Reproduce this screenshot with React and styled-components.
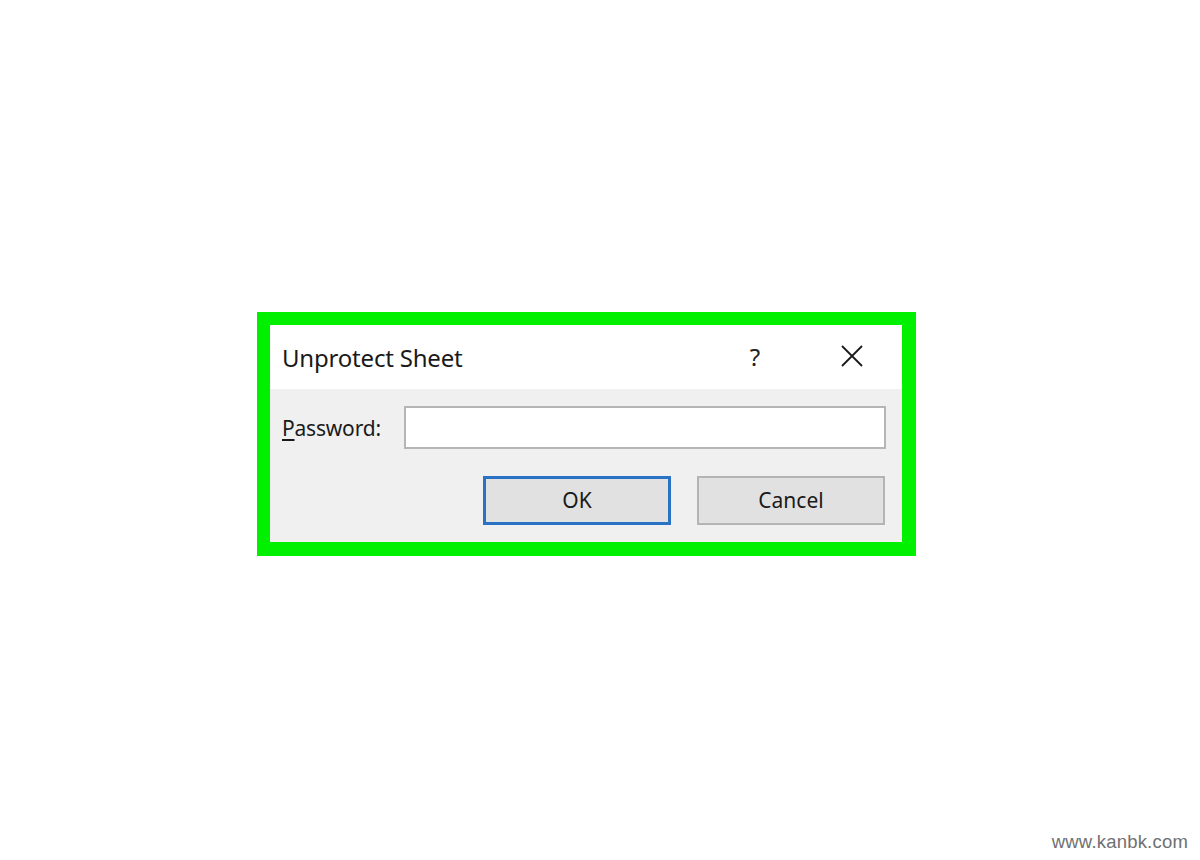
import React from "react";
import styled, { createGlobalStyle } from "styled-components";

const Global = createGlobalStyle`
  html, body { margin: 0; padding: 0; background: #ffffff; }
  body { font-family: "Noto Sans", "Open Sans", sans-serif; }
  #root { min-height: 860px; position: relative; }
`;

const Page = styled.div`
  width: 1200px;
  height: 860px;
  position: relative;
  overflow: hidden;
  padding-top: 312px;
  padding-left: 257px;
  box-sizing: border-box;
`;

const Frame = styled.div`
  width: 659px;
  box-sizing: border-box;
  border: 13px solid #00f000;
  border-right-width: 14px;
  border-bottom-width: 14px;
  background: #f0f0f0;
`;

const TitleBar = styled.div`
  height: 64px;
  background: #ffffff;
  display: flex;
  align-items: center;
  padding-left: 12px;
  padding-right: 38px;
`;

const Title = styled.div`
  flex: 1;
  font-size: 24px;
  color: #1a1a1a;
  letter-spacing: -0.2px;
  padding-top: 1px;
`;

const HelpGlyph = styled.div`
  font-size: 24px;
  color: #222;
  width: 20px;
  text-align: center;
  margin-right: 75px;
  padding-bottom: 2px;
`;

const CloseIcon = styled.svg`
  width: 24px;
  height: 24px;
  display: block;
  margin-bottom: 2px;
`;

const Body = styled.div`
  padding: 17px 16px 17px 12px;
  display: flex;
  flex-direction: column;
  gap: 27px;
`;

const FieldRow = styled.div`
  display: flex;
  align-items: center;
  gap: 22px;
`;

const Label = styled.label`
  font-size: 21px;
  color: #1a1a1a;
  letter-spacing: -0.2px;
  width: 100px;
  & u { text-decoration-thickness: 1.5px; text-underline-offset: 3px; }
`;

const Input = styled.div`
  flex: 1;
  height: 43px;
  box-sizing: border-box;
  background: #ffffff;
  border: 2px solid #b5b5b5;
`;

const ButtonRow = styled.div`
  display: flex;
  justify-content: flex-end;
  gap: 26px;
  padding-right: 1px;
`;

const Button = styled.div`
  width: 188px;
  height: 49px;
  box-sizing: border-box;
  background: #e1e1e1;
  border: ${p => (p.$default ? "3px solid #2a72c4" : "2px solid #b4b4b4")};
  display: flex;
  align-items: center;
  justify-content: center;
  font-size: 21px;
  color: #1a1a1a;
  padding-bottom: 1px;
`;

const Watermark = styled.div`
  position: absolute;
  right: 12px;
  bottom: 7px;
  font-family: "Liberation Sans", Arial, sans-serif;
  font-size: 18.5px;
  color: #707070;
  letter-spacing: 0.2px;
`;

export default function App() {
  return (
    <Page>
      <Global />
      <Frame>
        <TitleBar>
          <Title>Unprotect Sheet</Title>
          <HelpGlyph>?</HelpGlyph>
          <CloseIcon viewBox="0 0 24 24">
            <path d="M2 2 L22 22 M22 2 L2 22" stroke="#1a1a1a" strokeWidth="1.8" fill="none" />
          </CloseIcon>
        </TitleBar>
        <Body>
          <FieldRow>
            <Label><u>P</u>assword:</Label>
            <Input />
          </FieldRow>
          <ButtonRow>
            <Button $default>OK</Button>
            <Button>Cancel</Button>
          </ButtonRow>
        </Body>
      </Frame>
      <Watermark>www.kanbk.com</Watermark>
    </Page>
  );
}
